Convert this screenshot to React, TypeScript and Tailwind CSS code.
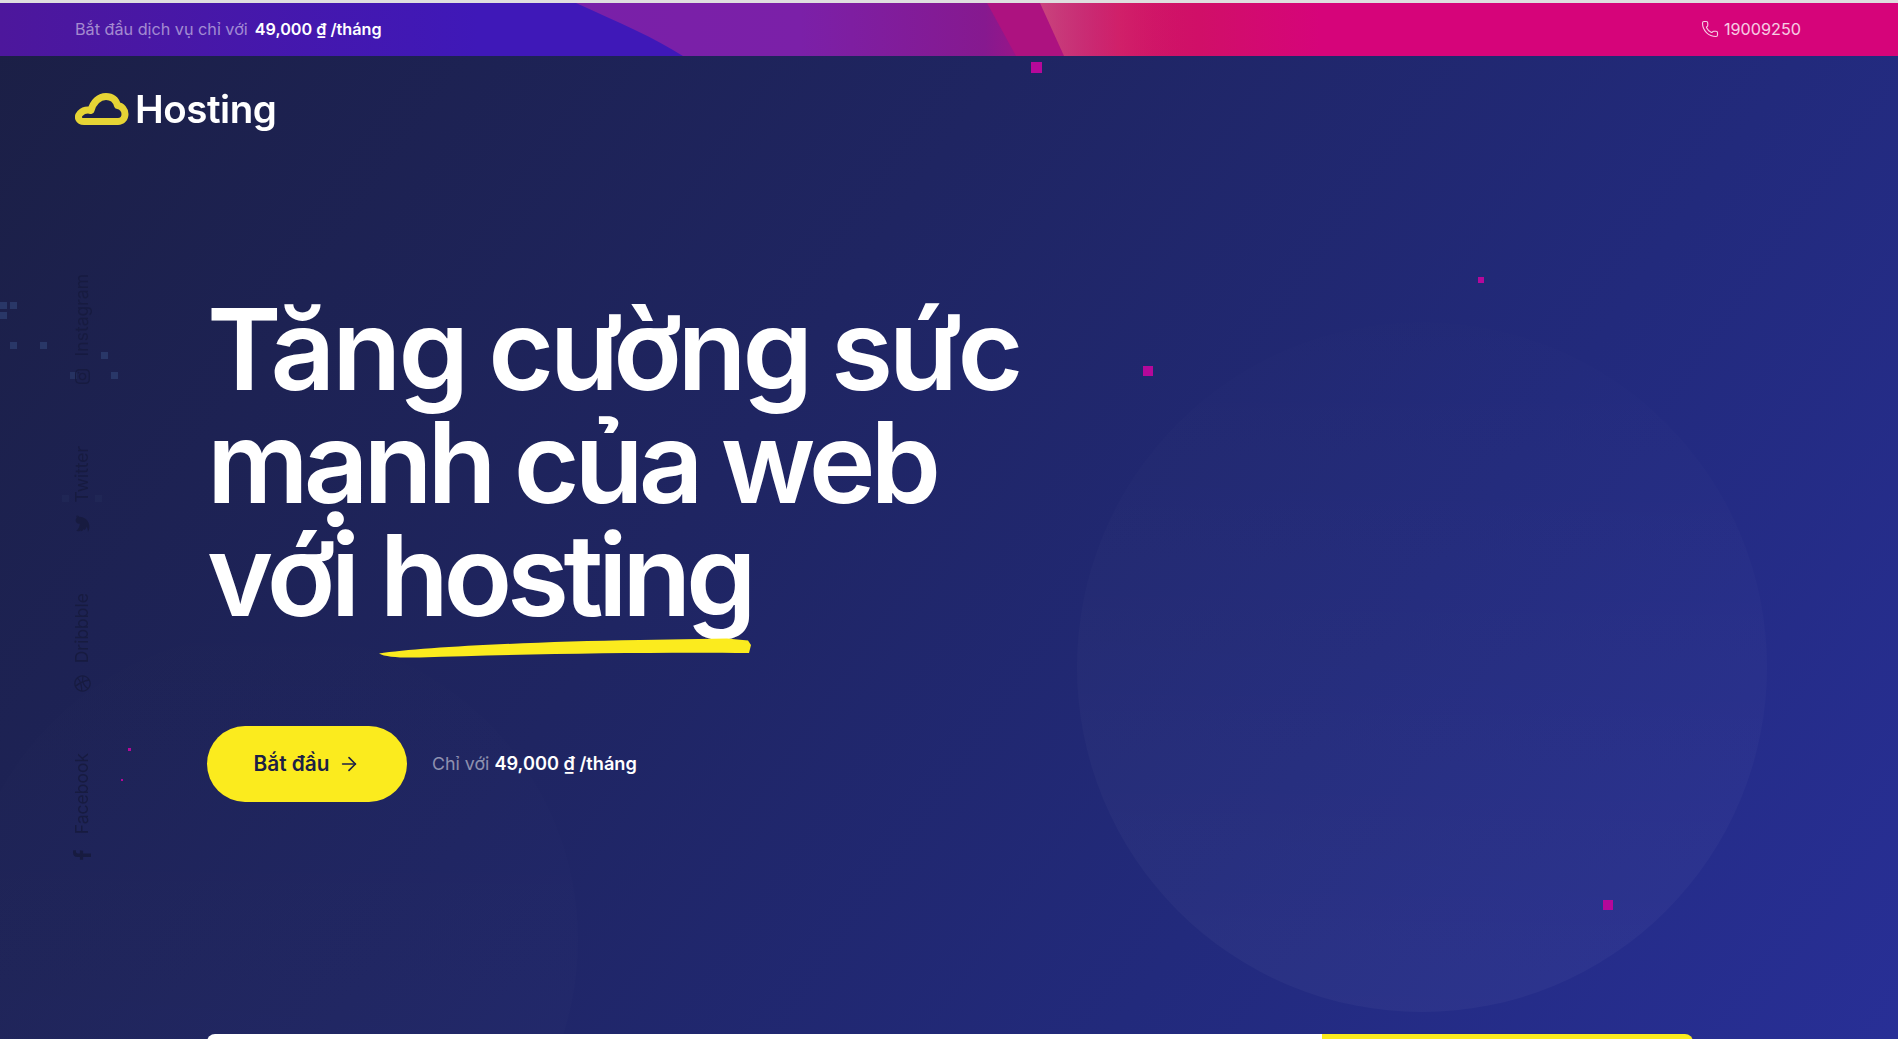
import React from "react";
import { FaFacebookF, FaTwitter, FaDribbble, FaInstagram } from "react-icons/fa";
import { ArrowRight, Phone } from "lucide-react";

const socials = [
  { name: "Instagram", icon: <FaInstagram size={17} /> },
  { name: "Twitter", icon: <FaTwitter size={17} /> },
  { name: "Dribbble", icon: <FaDribbble size={17} /> },
  { name: "Facebook", icon: <FaFacebookF size={18} /> },
];

const pixels = [
  [0, 302, 0.9], [10, 302, 0.9], [0, 312, 0.9], [10, 342, 0.9], [40, 342, 0.9], [101, 352, 0.9], [70, 372, 0.7], [111, 372, 0.9],
  [62, 495, 0.2], [95, 495, 0.2],
];

const magenta = [
  [1031, 62, 11, 11], [1478, 277, 6, 6], [1143, 366, 10, 10], [1603, 900, 10, 10], [128, 748, 3, 3], [121, 779, 2, 2],
];

export default function App() {
  return (
    <div className="relative h-[1039px] w-full overflow-hidden border-t-[3px] border-[#dfdfdf] bg-[linear-gradient(125deg,#1b1f45_0%,#1f2562_40%,#222a7c_70%,#282f96_100%)] font-['Inter',sans-serif] text-white">
      <div className="absolute left-[1077px] top-[319px] h-[690px] w-[690px] rounded-full bg-gradient-to-b from-white/[0.003] to-white/[0.035]" />
      <div className="absolute left-[-38px] top-[629px] h-[616px] w-[616px] rounded-full bg-gradient-to-b from-white/[0.002] to-white/[0.014]" />
      {pixels.map(([x, y, o]) => (
        <div key={`${x}-${y}`} className="absolute h-[7px] w-[7px] bg-[#2b3a6a]" style={{ left: x, top: y - 3, opacity: o }} />
      ))}
      {magenta.map(([x, y, w, h]) => (
        <div key={`${x}-${y}`} className="absolute bg-[#b5089a]" style={{ left: x, top: y - 3, width: w, height: h }} />
      ))}

      <div className="relative flex h-[53px] items-center justify-between overflow-hidden bg-[linear-gradient(90deg,#7420a8_0px,#7b20a8_800px,#86198f_985px,#a51383_1040px,#cf1765_1120px,#d00f68_1200px,#d6047a_1320px,#d6047a_1898px)] pl-[75px] pr-[97px] text-[16.2px]">
        <svg className="absolute left-0 top-0 h-[53px] w-[1898px]" viewBox="0 0 1898 53" preserveAspectRatio="none">
          <defs>
            <linearGradient id="barBlue" x1="0" x2="1" y1="0" y2="0">
              <stop offset="0" stopColor="#4d179c" />
              <stop offset="0.7" stopColor="#3f18b8" />
              <stop offset="1" stopColor="#3f18b8" />
            </linearGradient>
            <linearGradient id="barGlow" x1="0" x2="1" y1="0" y2="0">
              <stop offset="0" stopColor="#d6557a" stopOpacity="0.75" />
              <stop offset="1" stopColor="#d00f68" stopOpacity="0" />
            </linearGradient>
          </defs>
          <path d="M0 0H576C620 20 655 35 683 53H0Z" fill="url(#barBlue)" />
          <path d="M987 0H1040L1064 53H1016Z" fill="#ad1280" />
          <path d="M1040 0H1190V53H1064Z" fill="url(#barGlow)" />
        </svg>
        <div className="relative flex items-center gap-[7px]">
          <span className="text-white/50">Bắt đầu dịch vụ chỉ với</span>
          <span className="font-semibold">49,000 ₫ /tháng</span>
        </div>
        <div className="relative flex items-center gap-[5px] text-white/80">
          <Phone size={18} strokeWidth={1.5} />
          <span>19009250</span>
        </div>
      </div>

      <header className="relative flex h-[112px] items-start px-[75px] pt-[34px]">
        <div className="flex items-center gap-[6px]">
          <svg width="54" height="33" viewBox="0 0 54 33" fill="none">
            <path
              d="M9 28.500C3.500 28.500 2 24 5 20.500C8 17.500 12 16.500 16 17.500C18 9 24 3.500 31 3.500C37 3.500 41 7 42.500 12.500C47 13 50 17 50 21C50 25.500 47 28.500 43 28.500Z"
              stroke="#e6d435"
              strokeWidth="7"
              strokeLinejoin="round"
            />
          </svg>
          <span className="text-[38.500px] font-semibold leading-none tracking-[-0.012em] blur-[0.4px]">Hosting</span>
        </div>
      </header>

      <aside className="absolute left-[73px] top-[271px] flex flex-col items-center gap-[61px] text-[17.500px] leading-none text-[#171b40]">
        {socials.map((s) => (
          <div key={s.name} className="flex flex-col items-center gap-[12px]">
            <span className="rotate-180 [writing-mode:vertical-rl]">{s.name}</span>
            <span className="-rotate-90">{s.icon}</span>
          </div>
        ))}
      </aside>

      <main className="relative pl-[207px]">
        <h1 className="mt-[125px] text-[113px] font-semibold leading-[113px]">
          <span className="tracking-[-0.037em] [word-spacing:-2.4px]">
            <span className="tracking-[-0.026em]">Tăng</span> cường sức
          </span>
          <br />
          <span className="tracking-[-0.045em] [word-spacing:-1.2px]">mạnh của web</span>
          <br />
          <span className="tracking-[-0.04em]">với </span>
          <span className="relative inline-block tracking-[-0.048em]">
            hosting
            <svg className="absolute left-[-1px] top-[119px] h-[21px] w-[374px]" viewBox="379 638 374 21">
              <path
                d="M379 653.500C420 647.500 520 642 640 640L727 638.500L748 640.500L751 645L749 653C650 652 520 654 420 657.500C400 658 385 657 379 653.500Z"
                fill="#fbeb1e"
              />
            </svg>
          </span>
        </h1>
        <div className="mt-[94px] flex items-center gap-[25px]">
          <button className="flex h-[76px] w-[200px] items-center justify-center gap-[9px] rounded-full bg-[#fbeb1e] text-[20.800px] font-semibold text-[#1c2046]">
            Bắt đầu
            <ArrowRight size={22} strokeWidth={1.75} />
          </button>
          <div className="text-[17.800px]">
            <span className="text-white/50">Chỉ với </span>
            <span className="text-[18.200px] font-semibold">49,000 ₫ /tháng</span>
          </div>
        </div>
        <div className="mt-[232px] flex h-[20px] w-[1486px] overflow-hidden rounded-t-[8px]">
          <div className="w-[1115px] bg-white" />
          <div className="w-[371px] bg-[#fbeb1e]" />
        </div>
      </main>
    </div>
  );
}
